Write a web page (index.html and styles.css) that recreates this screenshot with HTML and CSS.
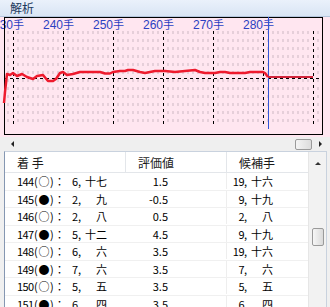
FILE: index.html
```html
<!DOCTYPE html>
<html lang="ja">
<head>
<meta charset="utf-8">
<link rel="stylesheet" href="styles.css">
</head>
<body>
<div class="app">
  <div class="titlebar"><span class="title">解析</span></div>
  <div class="chart">
    <svg class="plot" width="330" height="120" viewBox="0 17 330 120">
      <g class="minor">
        <path d="M8 31V127M18 31V127M23 31V127M28 31V127M33 31V127M38 31V127M43 31V127M48 31V127M53 31V127M58 31V127M68 31V127M73 31V127M78 31V127M83 31V127M88 31V127M93 31V127M98 31V127M103 31V127M108 31V127M118 31V127M123 31V127M128 31V127M133 31V127M138 31V127M143 31V127M148 31V127M153 31V127M158 31V127M168 31V127M173 31V127M178 31V127M183 31V127M188 31V127M193 31V127M198 31V127M203 31V127M208 31V127M218 31V127M223 31V127M228 31V127M233 31V127M238 31V127M243 31V127M248 31V127M253 31V127M258 31V127M268 31V127M273 31V127M278 31V127M283 31V127M288 31V127M293 31V127M298 31V127M303 31V127M308 31V127M318 31V127"/>
      </g>
      <g class="major">
        <path d="M13.5 31V127M63.5 31V127M113.5 31V127M163.5 31V127M213.5 31V127M263.5 31V127M313.5 31V127M4 78.5H322"/>
      </g>
      <g class="labels">
        <text x="13" y="29" text-anchor="end">230</text><text x="13" y="29">手</text>
        <text x="63" y="29" text-anchor="end">240</text><text x="63" y="29">手</text>
        <text x="113" y="29" text-anchor="end">250</text><text x="113" y="29">手</text>
        <text x="163" y="29" text-anchor="end">260</text><text x="163" y="29">手</text>
        <text x="213" y="29" text-anchor="end">270</text><text x="213" y="29">手</text>
        <text x="263" y="29" text-anchor="end">280</text><text x="263" y="29">手</text>
      </g>
      <rect class="frame" x="4.5" y="17.5" width="318" height="117"/>
      <path class="cursor" d="M268.5 17V129"/>
      <polyline class="eval" points="4,103 5,92 7,74 10,75 13,73 17,76 22,74 27,77 33,79 37,76 43,75 48,81 53,81 56,79 60,73 63,72 67,75 73,74 80,72 90,72 100,72 105,73.5 110,73.5 113,72 120,71 125,71 128,70 133,70 140,72 145,73 150,72 155,71 165,71 175,72 185,71 195,70 200,72 205,73 215,73 220,72 225,72 230,73 245,73 250,72 263,72 265,73 268,77"/>
      <polyline class="eval-after" points="268,77 313,77"/>
    </svg>
  </div>
  <div class="hscroll">
    <span class="arrow-left"></span>
    <span class="track"></span>
    <span class="thumb-h"></span>
    <span class="arrow-right"></span>
  </div>
  <div class="table">
    <div class="grid">
      <div class="head">
        <div class="hc c1">着 手</div>
        <div class="hc c2">評価値</div>
        <div class="hc c3">候補手</div>
      </div>
      <div class="row"><div class="c1"><span class="n">144</span><span class="s"><span class="p">(</span><span class="o">○</span><span class="p">)</span></span><span class="cl">：</span><span class="d">6</span><span class="cm">,</span><span class="k">十七</span></div><div class="c2 v">1.5</div><div class="c3"><span class="d2">19</span><span class="cm">,</span><span class="k2">十六</span></div></div>
      <div class="row"><div class="c1"><span class="n">145</span><span class="s"><span class="p">(</span><span class="o">●</span><span class="p">)</span></span><span class="cl">：</span><span class="d">2</span><span class="cm">,</span><span class="k">九</span></div><div class="c2 v">-0.5</div><div class="c3"><span class="d2">9</span><span class="cm">,</span><span class="k2">十九</span></div></div>
      <div class="row"><div class="c1"><span class="n">146</span><span class="s"><span class="p">(</span><span class="o">○</span><span class="p">)</span></span><span class="cl">：</span><span class="d">2</span><span class="cm">,</span><span class="k">八</span></div><div class="c2 v">0.5</div><div class="c3"><span class="d2">2</span><span class="cm">,</span><span class="k2">八</span></div></div>
      <div class="row"><div class="c1"><span class="n">147</span><span class="s"><span class="p">(</span><span class="o">●</span><span class="p">)</span></span><span class="cl">：</span><span class="d">5</span><span class="cm">,</span><span class="k">十二</span></div><div class="c2 v">4.5</div><div class="c3"><span class="d2">9</span><span class="cm">,</span><span class="k2">十九</span></div></div>
      <div class="row"><div class="c1"><span class="n">148</span><span class="s"><span class="p">(</span><span class="o">○</span><span class="p">)</span></span><span class="cl">：</span><span class="d">6</span><span class="cm">,</span><span class="k">六</span></div><div class="c2 v">3.5</div><div class="c3"><span class="d2">19</span><span class="cm">,</span><span class="k2">十六</span></div></div>
      <div class="row"><div class="c1"><span class="n">149</span><span class="s"><span class="p">(</span><span class="o">●</span><span class="p">)</span></span><span class="cl">：</span><span class="d">7</span><span class="cm">,</span><span class="k">六</span></div><div class="c2 v">3.5</div><div class="c3"><span class="d2">7</span><span class="cm">,</span><span class="k2">六</span></div></div>
      <div class="row"><div class="c1"><span class="n">150</span><span class="s"><span class="p">(</span><span class="o">○</span><span class="p">)</span></span><span class="cl">：</span><span class="d">5</span><span class="cm">,</span><span class="k">五</span></div><div class="c2 v">3.5</div><div class="c3"><span class="d2">5</span><span class="cm">,</span><span class="k2">五</span></div></div>
      <div class="row"><div class="c1"><span class="n">151</span><span class="s"><span class="p">(</span><span class="o">●</span><span class="p">)</span></span><span class="cl">：</span><span class="d">6</span><span class="cm">,</span><span class="k">四</span></div><div class="c2 v">3.5</div><div class="c3"><span class="d2">6</span><span class="cm">,</span><span class="k2">四</span></div></div>
    </div>
    <div class="vscroll">
      <span class="arrow-up"></span>
      <span class="thumb-v"></span>
    </div>
  </div>
</div>
</body>
</html>
```

FILE: styles.css
```css
* { box-sizing: border-box; }
html, body { margin: 0; padding: 0; }
body {
  width: 330px;
  height: 307px;
  overflow: hidden;
  background: #f0f0f0;
  font-family: "Noto Sans CJK JP", "Noto Sans", sans-serif;
}
.app {
  width: 330px;
  height: 307px;
  display: flex;
  flex-direction: column;
}
.titlebar {
  height: 17px;
  flex: none;
  background: linear-gradient(#eaf1fb, #d9e5f4);
  border-bottom: 1px solid #b4c6dd;
  padding-left: 10px;
  display: flex;
  align-items: center;
}
.title {
  font-size: 12px;
  line-height: 14px;
  color: #1e3a5f;
}
.chart {
  height: 120px;
  flex: none;
  background: #ffe6f0;
}
.plot { display: block; }
.minor path {
  stroke: #cdb8c3;
  stroke-width: 1;
  stroke-dasharray: 3 5;
  fill: none;
}
.major path {
  stroke: #000;
  stroke-width: 1;
  stroke-dasharray: 3 3;
  fill: none;
}
.labels text {
  font-family: "Liberation Sans", sans-serif;
  font-size: 12px;
  fill: #2b3fc2;
}
.labels text:nth-child(even) {
  font-family: "Noto Sans CJK JP", sans-serif;
  font-size: 11px;
}
.frame { fill: none; stroke: #000; stroke-width: 1; }
.cursor { stroke: #3355d8; stroke-width: 1; }
.eval { fill: none; stroke: #ee1b2e; stroke-width: 2.5; stroke-linejoin: round; }
.eval-after { fill: none; stroke: #d0243a; stroke-width: 2; }

.hscroll {
  height: 14px;
  flex: none;
  background: #efefef;
  display: flex;
  align-items: center;
}
.arrow-left {
  margin-left: 11px;
  width: 0; height: 0;
  border-top: 3px solid transparent;
  border-bottom: 3px solid transparent;
  border-right: 3px solid #222;
}
.track { flex: 1; }
.thumb-h {
  width: 17px;
  height: 11px;
  border: 1px solid #9a9a9a;
  border-radius: 2px;
  background: linear-gradient(90deg, #f4f4f4, #dcdcdc);
  margin-right: 7px;
}
.arrow-right {
  margin-right: 8px;
  width: 0; height: 0;
  border-top: 3px solid transparent;
  border-bottom: 3px solid transparent;
  border-left: 3px solid #222;
}

.table {
  flex: 1;
  margin-left: 4px;
  margin-right: 3px;
  background: #fff;
  border-left: 1px solid #8597b2;
  border-top: 1px solid #c9d2de;
  border-right: 1px solid #c9d2de;
  display: flex;
  overflow: hidden;
}
.grid {
  flex: 1;
  font-size: 11px;
  color: #000;
}
.head {
  height: 21px;
  display: flex;
  border-bottom: 1px solid #e3e6ea;
  font-size: 12px;
}
.hc {
  display: flex;
  align-items: center;
  padding-left: 12px;
  color: #1a1a1a;
}
.head .c1, .head .c2 { border-right: 1px solid #e3e6ea; }
.c1 { width: 121px; flex: none; }
.c2 { width: 101px; flex: none; }
.c3 { flex: 1; }
.row {
  height: 17.5px;
  display: flex;
  align-items: center;
  border-bottom: 1px solid #f0f0f0;
  line-height: 16px;
  white-space: pre;
}
.row .c1 { padding-left: 12px; display: flex; }
.row .c2 { text-align: right; padding-right: 58px; border-right: 1px solid #eeeeee; }
.row .c3 { display: flex; padding-left: 4px; }
.n { width: 17px; letter-spacing: -0.6px; }
.s { width: 20px; display: flex; align-items: center; }
.p { width: 4px; }
.o { width: 12px; font-size: 11px; text-align: center; line-height: 16px; }
.cl { width: 11px; }
.d { width: 13px; text-align: right; }
.cm { width: 4px; }
.k { width: 25px; text-align: right; }
.d2 { width: 13px; text-align: right; letter-spacing: -0.5px; }
.k2 { width: 25px; text-align: right; }

.vscroll {
  width: 18px;
  flex: none;
  background: #f2f2f2;
  border-left: 1px solid #e6e6e6;
  display: flex;
  flex-direction: column;
  align-items: center;
}
.arrow-up {
  margin-top: 10px;
  width: 0; height: 0;
  border-left: 3px solid transparent;
  border-right: 3px solid transparent;
  border-bottom: 3px solid #333;
}
.thumb-v {
  margin-top: 63px;
  width: 12px;
  height: 18px;
  border: 1px solid #9a9a9a;
  border-radius: 2px;
  background: linear-gradient(90deg, #f6f6f6, #dadada);
}
```
